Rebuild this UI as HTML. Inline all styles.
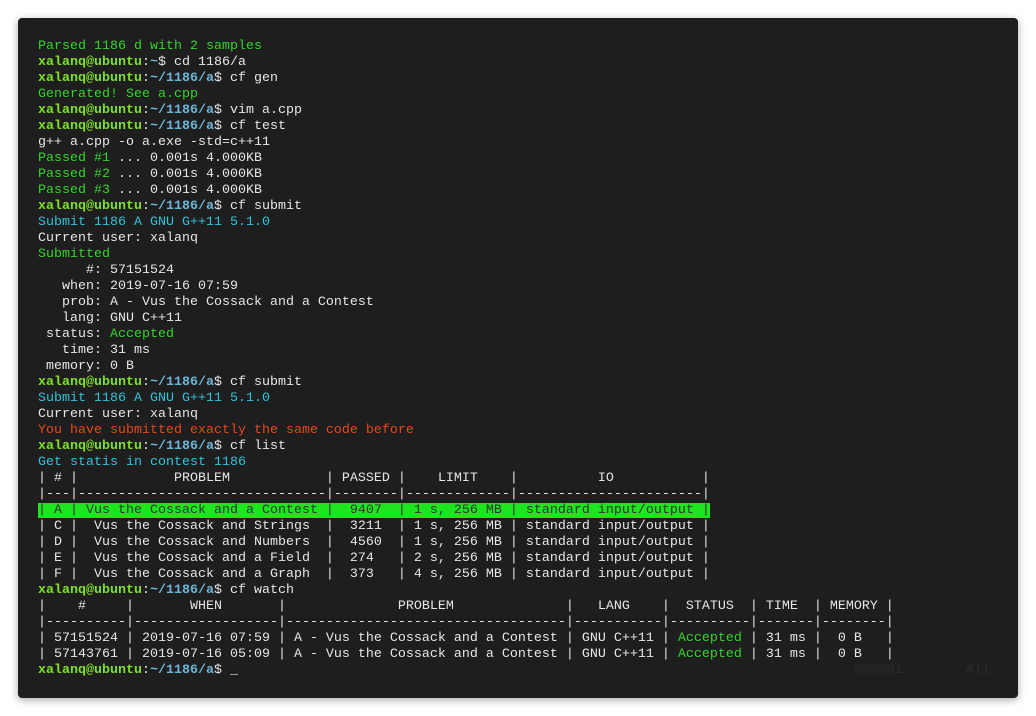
<!DOCTYPE html>
<html><head><meta charset="utf-8"><style>
html,body{margin:0;padding:0;background:#fff;width:1036px;height:716px;overflow:hidden}
.win{position:absolute;left:18px;top:18px;width:1000px;height:680px;background:#1e1e1e;border-radius:4px;box-shadow:0 2px 8px rgba(0,0,0,.35)}
pre{position:absolute;left:38px;top:39px;margin:0;font-family:"Liberation Mono",monospace;font-size:13.33px;line-height:16px;color:#e6e6e6;white-space:pre}
.g{color:#33d42a}.p{color:#7fe02a;font-weight:bold}.b{color:#6db6d6;font-weight:bold}.c{color:#2ec4d8}.r{color:#e8471c}
.h{background:#1ee61e;color:#333}
.f{position:absolute;top:663px;font-family:"Liberation Mono",monospace;font-size:13.33px;color:#2c2c2c}
</style></head><body><div class="win"></div>
<pre><span class="g">Parsed 1186 d with 2 samples</span>
<span class="p">xalanq@ubuntu</span>:<span class="b">~</span>$ cd 1186/a
<span class="p">xalanq@ubuntu</span>:<span class="b">~/1186/a</span>$ cf gen
<span class="g">Generated! See a.cpp</span>
<span class="p">xalanq@ubuntu</span>:<span class="b">~/1186/a</span>$ vim a.cpp
<span class="p">xalanq@ubuntu</span>:<span class="b">~/1186/a</span>$ cf test
g++ a.cpp -o a.exe -std=c++11
<span class="g">Passed #1</span> ... 0.001s 4.000KB
<span class="g">Passed #2</span> ... 0.001s 4.000KB
<span class="g">Passed #3</span> ... 0.001s 4.000KB
<span class="p">xalanq@ubuntu</span>:<span class="b">~/1186/a</span>$ cf submit
<span class="c">Submit 1186 A GNU G++11 5.1.0</span>
Current user: xalanq
<span class="g">Submitted</span>
      #: 57151524
   when: 2019-07-16 07:59
   prob: A - Vus the Cossack and a Contest
   lang: GNU C++11
 status: <span class="g">Accepted</span>
   time: 31 ms
 memory: 0 B
<span class="p">xalanq@ubuntu</span>:<span class="b">~/1186/a</span>$ cf submit
<span class="c">Submit 1186 A GNU G++11 5.1.0</span>
Current user: xalanq
<span class="r">You have submitted exactly the same code before</span>
<span class="p">xalanq@ubuntu</span>:<span class="b">~/1186/a</span>$ cf list
<span class="c">Get statis in contest 1186</span>
| # |            PROBLEM            | PASSED |    LIMIT    |          IO           |
|---|-------------------------------|--------|-------------|-----------------------|
<span class="h">| A | Vus the Cossack and a Contest |  9407  | 1 s, 256 MB | standard input/output |</span>
| C |  Vus the Cossack and Strings  |  3211  | 1 s, 256 MB | standard input/output |
| D |  Vus the Cossack and Numbers  |  4560  | 1 s, 256 MB | standard input/output |
| E |  Vus the Cossack and a Field  |  274   | 2 s, 256 MB | standard input/output |
| F |  Vus the Cossack and a Graph  |  373   | 4 s, 256 MB | standard input/output |
<span class="p">xalanq@ubuntu</span>:<span class="b">~/1186/a</span>$ cf watch
|    #     |       WHEN       |              PROBLEM              |   LANG    |  STATUS  | TIME  | MEMORY |
|----------|------------------|-----------------------------------|-----------|----------|-------|--------|
| 57151524 | 2019-07-16 07:59 | A - Vus the Cossack and a Contest | GNU C++11 | <span class="g">Accepted</span> | 31 ms |  0 B   |
| 57143761 | 2019-07-16 05:09 | A - Vus the Cossack and a Contest | GNU C++11 | <span class="g">Accepted</span> | 31 ms |  0 B   |
<span class="p">xalanq@ubuntu</span>:<span class="b">~/1186/a</span>$ _</pre>
<div class="f" style="left:855px">@@@@@1</div><div class="f" style="left:966px">All</div>
</body></html>
